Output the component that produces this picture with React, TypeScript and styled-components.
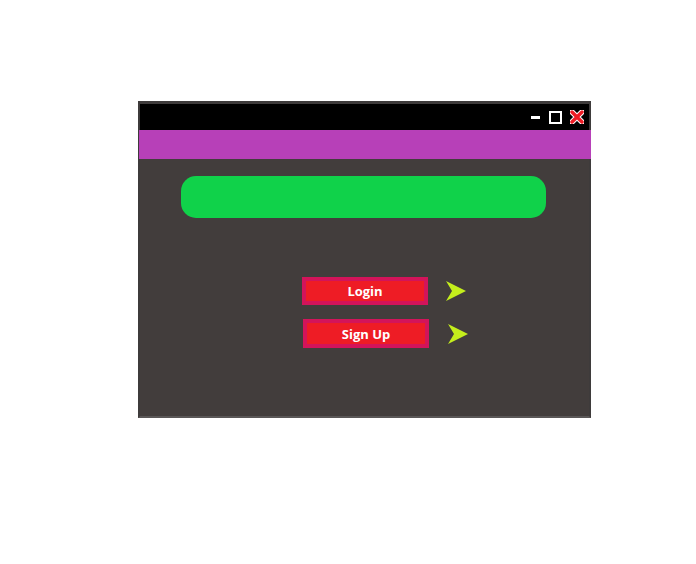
import React from "react";
import styled, { createGlobalStyle } from "styled-components";

const Global = createGlobalStyle`
  html, body { margin: 0; padding: 0; background: #ffffff; }
  body { font-family: "Open Sans", "Liberation Sans", sans-serif; }
`;

const Page = styled.div`
  width: 696px;
  height: 564px;
  padding: 101px 0 0 138px;
  box-sizing: border-box;
`;

const Window = styled.div`
  width: 453px;
  height: 317px;
  box-sizing: border-box;
  border: 2px solid #3e3b3b;
  border-top-width: 3px;
  border-bottom-color: #5a5757;
  background: #423d3c;
  display: flex;
  flex-direction: column;
`;

const TitleBar = styled.div`
  height: 26px;
  background: #000;
  display: flex;
  align-items: center;
  justify-content: flex-end;
  gap: 8px;
  padding-right: 5px;
`;

const MenuBar = styled.div`
  height: 29px;
  background: #b740b8;
  margin: 0 -2px 0 -1px;
`;

const Body = styled.div`
  flex: 1;
  display: flex;
  flex-direction: column;
  padding: 17px 0 0 41px;
`;

const SearchBar = styled.div`
  width: 365px;
  height: 42px;
  border-radius: 15px;
  background: #10d24a;
`;

const Row = styled.div<{ $left: number; $top: number; $gap: number }>`
  display: flex;
  align-items: center;
  margin-left: ${(p) => p.$left}px;
  margin-top: ${(p) => p.$top}px;
  gap: ${(p) => p.$gap}px;
`;

const ActionButton = styled.button<{ $h: number }>`
  width: 126px;
  height: ${(p) => p.$h}px;
  box-sizing: border-box;
  border: 4px solid #d3145a;
  background: #ee1c25;
  color: #fff;
  font-family: "Open Sans", "Liberation Sans", sans-serif;
  font-weight: 700;
  font-size: 13px;
  padding: 0;
  margin: 0;
  display: flex;
  align-items: center;
  justify-content: center;
`;

const Arrow = () => (
  <svg width="20" height="20" viewBox="0 0 20 20">
    <path d="M0 0 L20 10 L0 20 L6 10 Z" fill="#c4ee1c" />
  </svg>
);

const MinIcon = () => (
  <svg width="10" height="13" viewBox="0 0 10 13">
    <rect x="0" y="5" width="9" height="3" fill="#fff" />
  </svg>
);

const MaxIcon = () => (
  <svg width="13" height="13" viewBox="0 0 13 13">
    <rect x="1" y="1" width="11" height="11" fill="none" stroke="#fff" strokeWidth="2" />
  </svg>
);

const CloseIcon = () => (
  <svg width="14" height="14" viewBox="0 0 14 14">
    <path d="M2 2 L12 12 M12 2 L2 12" stroke="#fff" strokeWidth="5.5" strokeLinecap="round" />
    <path d="M2 2 L12 12 M12 2 L2 12" stroke="#ee1c25" strokeWidth="3.5" strokeLinecap="round" />
  </svg>
);

export default function App() {
  return (
    <>
      <Global />
      <Page>
        <Window>
          <TitleBar>
            <MinIcon />
            <MaxIcon />
            <CloseIcon />
          </TitleBar>
          <MenuBar />
          <Body>
            <SearchBar />
            <Row $left={121} $top={59} $gap={18}>
              <ActionButton $h={28}>Login</ActionButton>
              <Arrow />
            </Row>
            <Row $left={122} $top={14} $gap={19}>
              <ActionButton $h={29}>Sign Up</ActionButton>
              <Arrow />
            </Row>
          </Body>
        </Window>
      </Page>
    </>
  );
}
